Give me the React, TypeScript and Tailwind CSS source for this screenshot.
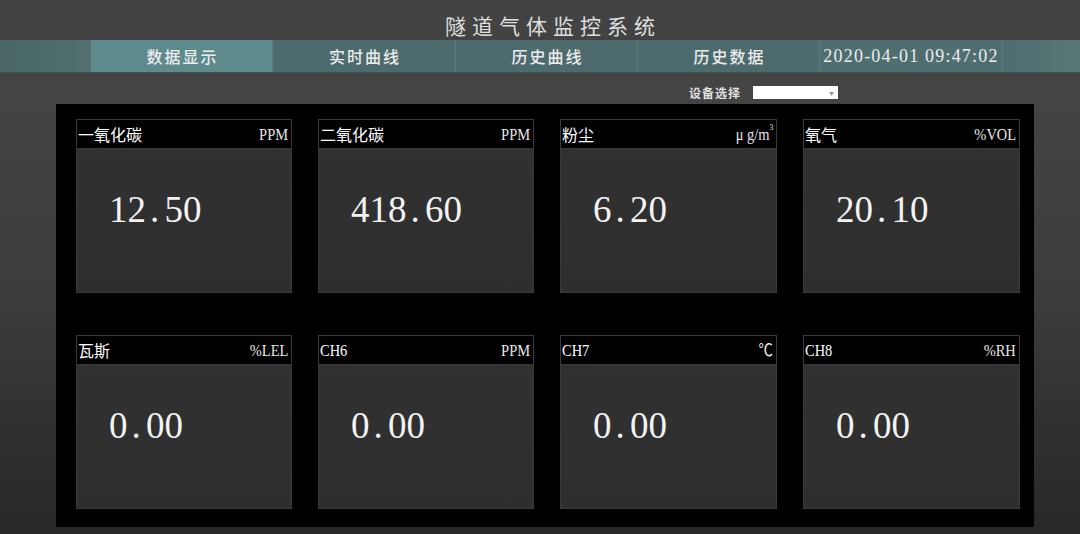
import React from "react";

const cjk = { fontFamily: '"Noto Sans CJK SC", "Noto Sans", sans-serif' };
const serif = { fontFamily: '"Liberation Serif", "Noto Sans CJK SC", serif' };

type Item = { label: string; unit: React.ReactNode; value: string; latin?: boolean };

const row1: Item[] = [
  { label: "一氧化碳", unit: "PPM", value: "12.50" },
  { label: "二氧化碳", unit: "PPM", value: "418.60" },
  { label: "粉尘", unit: (<span>μ g/m<sup className="text-[9px] align-top relative top-[1px]">3</sup></span>), value: "6.20" },
  { label: "氧气", unit: "%VOL", value: "20.10" },
];
const row2: Item[] = [
  { label: "瓦斯", unit: "%LEL", value: "0.00" },
  { label: "CH6", unit: "PPM", value: "0.00", latin: true },
  { label: "CH7", unit: "℃", value: "0.00", latin: true },
  { label: "CH8", unit: "%RH", value: "0.00", latin: true },
];

function Value({ v }: { v: string }) {
  return (
    <div className="text-[37px] leading-none text-[#f2f2f2] pl-[32px] pt-[42px] whitespace-nowrap" style={serif}>
      {v.split("").map((c, i) =>
        c === "." ? (
          <span key={i} className="inline-block w-[0.5em] text-left pl-[4px]">.</span>
        ) : (
          <span key={i}>{c}</span>
        )
      )}
    </div>
  );
}

function Card({ item, w }: { item: Item; w: string }) {
  return (
    <div className={`${w} h-[174px] flex flex-col border border-[#3a3a3a] bg-[#303030]`}>
      <div className="h-[29px] shrink-0 bg-black border-b border-[#3a3a3a] flex items-center justify-between pl-[1px] pr-[3px] text-white">
        {item.latin ? (
          <span className="inline-block text-[17px] leading-none origin-left scale-x-[0.85]" style={serif}>
            {item.label}
          </span>
        ) : (
          <span className="text-[16px] leading-none" style={cjk}>
            {item.label}
          </span>
        )}
        <span className="inline-block text-[17px] leading-none text-[#e8e8e8] origin-right scale-x-[0.85]" style={serif}>
          {item.unit}
        </span>
      </div>
      <div className="flex-1 bg-gradient-to-b from-[#313131] to-[#2e2e2e]">
        <Value v={item.value} />
      </div>
    </div>
  );
}

function Row({ items }: { items: Item[] }) {
  const widths = ["w-[216px]", "w-[216px]", "w-[217px]", "w-[217px]"];
  return (
    <div className="flex gap-[26px]">
      {items.map((it, i) => (
        <Card key={i} item={it} w={widths[i]} />
      ))}
    </div>
  );
}

export default function App() {
  const tabs = ["数据显示", "实时曲线", "历史曲线", "历史数据"];
  const tabW = ["w-[182px]", "w-[183px]", "w-[182px]", "w-[182px]"];
  return (
    <div
      className="w-[1080px] h-[534px] overflow-hidden flex flex-col bg-gradient-to-b from-[#474747] via-[#3e3e3e] to-[#282828]"
      style={cjk}
    >
      {/* Title */}
      <div className="h-[40px] shrink-0 flex items-center justify-center pt-[10px] pl-[26px] bg-[#434343]">
        <span className="text-[21px] leading-none tracking-[6px] text-[#dedede]">隧道气体监控系统</span>
      </div>

      {/* Nav */}
      <div className="h-[33px] shrink-0 flex bg-[#4c6a6b] border-b border-[#3f5253]">
        <div className="w-[91px] bg-gradient-to-r from-[#4a6667] to-[#51706f]" />
        {tabs.map((t, i) => (
          <div
            key={t}
            className={`${tabW[i]} flex items-center justify-center border-r border-[#5d7b7c] ${
              i === 0 ? "bg-[#5e8a8c]" : "bg-[#4d6b6c]"
            }`}
          >
            <span className="text-[16px] leading-none tracking-[2px] pl-[2px] font-medium text-[#ececec]">{t}</span>
          </div>
        ))}
        <div className="w-[183px] flex items-center justify-center border-r border-[#5d7b7c] bg-[#4f6e6f]">
          <span className="text-[18px] leading-none tracking-[1.2px] text-[#ececec]" style={serif}>
            2020-04-01 09:47:02
          </span>
        </div>
        <div className="flex-1 bg-gradient-to-r from-[#4f6d6e] to-[#587676]" />
      </div>

      {/* Device select row */}
      <div className="h-[31px] shrink-0 flex justify-end items-start pt-[13px] pr-[242px]">
        <span className="text-[12px] leading-[14px] tracking-[1px] font-bold text-[#e0e0e0] mr-[12px]">设备选择</span>
        <div className="w-[85px] h-[13px] bg-white flex items-center justify-end pr-[4px]">
          <span className="text-[5px] leading-none text-[#999]">▼</span>
        </div>
      </div>

      {/* Panel */}
      <div className="ml-[56px] w-[978px] h-[423px] shrink-0 bg-black pt-[15px] pl-[20px] flex flex-col gap-[42px]">
        <Row items={row1} />
        <Row items={row2} />
      </div>
    </div>
  );
}
